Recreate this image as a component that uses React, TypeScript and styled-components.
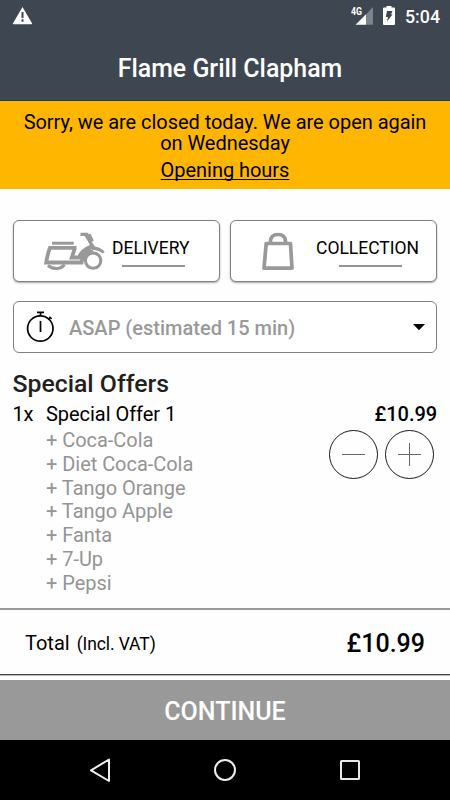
import React from "react";
import styled, { createGlobalStyle } from "styled-components";

const GlobalStyle = createGlobalStyle`
  *, *::before, *::after { box-sizing: border-box; }
  body { margin: 0; background: #fff; font-family: Roboto, sans-serif; color: #000; }
  button { font: inherit; color: inherit; padding: 0; margin: 0; background: none; border: 0; }
  svg { display: block; flex: none; }
`;

const Screen = styled.main`
  width: 450px;
  height: 800px;
  display: flex;
  flex-direction: column;
  overflow: hidden;
  background: #fefefe;
`;

const Header = styled.header`
  height: 101px;
  background: #3e4652;
  border-bottom: 1px solid #23384f;
  color: #fff;
`;

const StatusBar = styled.div`
  height: 34px;
  padding: 0 10px 0 12px;
  display: flex;
  justify-content: space-between;
`;

const StatusIcons = styled.div`
  display: flex;
`;

const BatterySlot = styled.span`
  margin-left: 7px;
`;

const Clock = styled.span`
  margin-left: 9px;
  font-size: 17.8px;
  line-height: 34px;
  font-weight: 500;
`;

const Title = styled.h1`
  margin: 0;
  padding-left: 10px;
  font-size: 24.9px;
  line-height: 69px;
  font-weight: 500;
  text-align: center;
`;

const Banner = styled.section`
  height: 88px;
  padding-top: 11px;
  background: #ffb600;
  text-align: center;
  font-size: 20px;
  line-height: 22px;
  letter-spacing: -0.04px;
`;

const BannerText = styled.p`
  margin: 0 20px;
  line-height: 21px;
`;

const HoursLink = styled.a`
  display: inline-block;
  margin-top: 5px;
  line-height: 23px;
  text-decoration: underline;
  text-decoration-thickness: 1px;
  text-underline-offset: 2px;
  text-decoration-skip-ink: none;
`;

const Methods = styled.div`
  display: grid;
  grid-template-columns: 207px 207px;
  column-gap: 10px;
  margin: 31px 0 0 13px;
`;

const MethodButton = styled.button<{ $inset: number; $gap: number }>`
  height: 62px;
  padding-left: ${(p) => p.$inset}px;
  display: flex;
  align-items: flex-start;
  gap: ${(p) => p.$gap}px;
  border: 1px solid #808080;
  border-radius: 6px;
  background: #fff;
  box-shadow: 0 1px 2px rgba(0, 0, 0, 0.35);
`;

const MethodLabel = styled.span`
  display: flex;
  flex-direction: column;
  align-items: center;
  padding-top: 16px;
  font-size: 17.5px;
  line-height: 22px;
`;

const Underline = styled.span`
  width: 63px;
  height: 2px;
  margin: 6px 0 0 6px;
  background: #949494;
`;

const TimeSelect = styled.button`
  width: 424px;
  height: 52px;
  margin: 19px 0 0 13px;
  padding: 0 11px 0 12px;
  display: flex;
  align-items: center;
  border: 1px solid #808080;
  border-radius: 6px;
  background: #fff;
`;

const TimeText = styled.span`
  flex: 1;
  margin-left: 14px;
  padding-top: 1px;
  text-align: left;
  font-size: 20px;
  font-weight: 500;
  color: #999;
`;

const Basket = styled.section`
  height: 255px;
  padding: 16px 13px 0 12.5px;
`;

const CategoryTitle = styled.h2`
  margin: 0;
  font-size: 24.8px;
  line-height: 30px;
  font-weight: 500;
  color: #231f20;
`;

const ItemRow = styled.div`
  display: grid;
  grid-template-columns: 33.5px 1fr auto;
  font-size: 20px;
  line-height: 24px;
  margin-top: 3px;
`;

const Quantity = styled.span`
  letter-spacing: -0.2px;
`;

const ItemName = styled.div`
  letter-spacing: -0.04px;
`;

const Extras = styled.ul`
  margin: 3px 0 0;
  padding: 0;
  list-style: none;
  color: #949494;
`;

const Extra = styled.li`
  line-height: 23.8px;
`;

const PriceColumn = styled.div`
  display: flex;
  flex-direction: column;
  align-items: flex-end;
`;

const ItemPrice = styled.span`
  font-weight: 500;
  font-size: 20px;
  letter-spacing: -0.06px;
`;

const Stepper = styled.div`
  display: flex;
  gap: 7px;
  margin: 4px 3px 0 0;
`;

const TotalBar = styled.section`
  height: 67px;
  padding: 2px 25px 0;
  display: flex;
  align-items: center;
  border-top: 2px solid #999;
  border-bottom: 1px solid #444;
  box-shadow: 0 1px 0 #bbb;
`;

const TotalLabel = styled.span`
  flex: 1;
  font-size: 20px;
`;

const VatNote = styled.span`
  margin-left: 2px;
  font-size: 17.5px;
  letter-spacing: -0.1px;
`;

const TotalPrice = styled.span`
  font-size: 25px;
  font-weight: 500;
`;

const ContinueButton = styled.button`
  height: 60px;
  margin-top: 5px;
  padding-top: 2px;
  background: #999;
  color: #fff;
  font-size: 25px;
  font-weight: 500;
  text-align: center;
`;

const NavBar = styled.nav`
  height: 60px;
  display: flex;
  justify-content: space-between;
  align-items: center;
  padding: 0 88px;
  background: #000;
`;

const WarningIcon = () => (
  <svg width="22" height="30" viewBox="0 0 22 30">
    <path d="M10.5 7 20 23.2Q20.4 24.3 19.3 24.3H1.7Q.6 24.3 1 23.2Z" fill="#fff" />
    <path d="M10.5 12v6M10.5 19.3v2.4" stroke="#3e4652" strokeWidth="2" />
  </svg>
);

const SignalIcon = () => (
  <svg width="25" height="30" viewBox="0 0 25 30">
    <path d="M23 7v17.7H16V14.5Z" fill="#7d838b" />
    <path d="M16 14.3v10.4H5.5Z" fill="#fff" />
    <text x="1" y="15" fontFamily="Roboto" fontWeight="700" fontSize="10.5" textLength="11" lengthAdjust="spacingAndGlyphs" fill="#fff">4G</text>
  </svg>
);

const BatteryIcon = () => (
  <svg width="14" height="30" viewBox="0 0 14 30">
    <path d="M4.5 6h5v1.5H12q1 0 1 1V24q0 1-1 1H2q-1 0-1-1V8.5q0-1 1-1h2.5Z" fill="#fff" />
    <path d="M5 11h5.5L9 14.5H10.5L5 21.5 6 17H3.8Z" fill="#3e4652" />
  </svg>
);

const ScooterIcon = () => (
  <svg width="62" height="60" viewBox="44 221 62 60" fill="none" stroke="#999">
    <path d="M52 243.2H73.8" strokeWidth="3" />
    <path d="M76.5 247.8H50Q47.5 254 46.2 262.5H81.5Q82.5 254.500 91 249.500M75 247.800 71.800 257.500H79Q81.500 250.500 91 246.500" strokeWidth="3.8" />
    <path d="M80.5 232.7H87.8L88.5 234H90.8L93.8 240.8 91.6 242 95 246.5Q101.5 247.5 104.8 252L102.5 253.5Q99 250.2 93 250L89.5 248.5 90.5 246 84.8 236H80.5Z" fill="#999" stroke="none" />
    <path d="M81.8 263.5Q81.5 250.8 93 250.8" strokeWidth="2" />
    <path d="M48 265.5Q51.5 268.500 56.500 268.500T64.500 264.500" strokeWidth="3" />
    <circle cx="93.1" cy="260.6" r="7.7" strokeWidth="3.1" />
  </svg>
);

const BagIcon = () => (
  <svg width="34" height="60" viewBox="261 221 34 60" fill="none" stroke="#999" strokeLinejoin="round">
    <path d="M266.2 243.5H290.5L292 268.2H264Z" strokeWidth="3.7" />
    <path d="M270.4 244v-2.5Q270.8 234.5 278 234.5T285.5 241.5V244" strokeWidth="3.7" />
  </svg>
);

const StopwatchIcon = () => (
  <svg width="29" height="50" viewBox="26 302 29 50" fill="none" stroke="#000" strokeWidth="1.7">
    <circle cx="40.3" cy="328.5" r="12.7" />
    <path d="M40.5 321v11M37 312.3h7M40.5 312.5v3.5M48.5 320l2-2.7" />
    <path d="M49.5 316.8l2.3 2" strokeWidth="1.2" />
  </svg>
);

const CaretIcon = () => (
  <svg width="12" height="8" viewBox="0 0 12 8">
    <path d="M0 1h12L6 7.2Z" fill="#000" />
  </svg>
);

const StepIcon = ({ plus = false }: { plus?: boolean }) => (
  <svg width="49" height="49" viewBox="0 0 49 49" fill="none">
    <circle cx="24.5" cy="24.5" r="24" stroke="#000" strokeWidth="0.9" />
    <path d={plus ? "M13 24.5h23M24.5 13v23" : "M13 24.5h23"} stroke="#666" />
  </svg>
);

const BackIcon = () => (
  <svg width="24" height="26" viewBox="0 0 24 26" fill="none" stroke="#eee" strokeWidth="2">
    <path d="M21 2.5v21.5L3 13.3Z" strokeLinejoin="round" />
  </svg>
);

const HomeIcon = () => (
  <svg width="24" height="24" viewBox="0 0 24 24" fill="none" stroke="#eee" strokeWidth="2">
    <circle cx="12" cy="12" r="10" />
  </svg>
);

const RecentsIcon = () => (
  <svg width="24" height="24" viewBox="0 0 24 24" fill="none" stroke="#e8e8e8" strokeWidth="2">
    <rect x="3" y="3" width="18" height="18" rx="0.5" />
  </svg>
);

const extras = ["Coca-Cola", "Diet Coca-Cola", "Tango Orange", "Tango Apple", "Fanta", "7-Up", "Pepsi"];

export default function App() {
  return (
    <>
      <GlobalStyle />
      <Screen>
        <Header>
          <StatusBar>
            <WarningIcon />
            <StatusIcons>
              <SignalIcon />
              <BatterySlot>
                <BatteryIcon />
              </BatterySlot>
              <Clock>5:04</Clock>
            </StatusIcons>
          </StatusBar>
          <Title>Flame Grill Clapham</Title>
        </Header>
        <Banner>
          <BannerText>Sorry, we are closed today. We are open again on Wednesday</BannerText>
          <HoursLink>Opening hours</HoursLink>
        </Banner>
        <Methods>
          <MethodButton $inset={30} $gap={6}>
            <ScooterIcon />
            <MethodLabel>
              DELIVERY
              <Underline />
            </MethodLabel>
          </MethodButton>
          <MethodButton $inset={30} $gap={21}>
            <BagIcon />
            <MethodLabel>
              COLLECTION
              <Underline />
            </MethodLabel>
          </MethodButton>
        </Methods>
        <TimeSelect>
          <StopwatchIcon />
          <TimeText>ASAP (estimated 15 min)</TimeText>
          <CaretIcon />
        </TimeSelect>
        <Basket>
          <CategoryTitle>Special Offers</CategoryTitle>
          <ItemRow>
            <Quantity>1x</Quantity>
            <ItemName>
              Special Offer 1
              <Extras>
                {extras.map((name) => (
                  <Extra key={name}>+ {name}</Extra>
                ))}
              </Extras>
            </ItemName>
            <PriceColumn>
              <ItemPrice>£10.99</ItemPrice>
              <Stepper>
                <button aria-label="Remove one"><StepIcon /></button>
                <button aria-label="Add one"><StepIcon plus /></button>
              </Stepper>
            </PriceColumn>
          </ItemRow>
        </Basket>
        <TotalBar>
          <TotalLabel>
            Total <VatNote>(Incl. VAT)</VatNote>
          </TotalLabel>
          <TotalPrice>£10.99</TotalPrice>
        </TotalBar>
        <ContinueButton>CONTINUE</ContinueButton>
        <NavBar>
          <BackIcon />
          <HomeIcon />
          <RecentsIcon />
        </NavBar>
      </Screen>
    </>
  );
}
